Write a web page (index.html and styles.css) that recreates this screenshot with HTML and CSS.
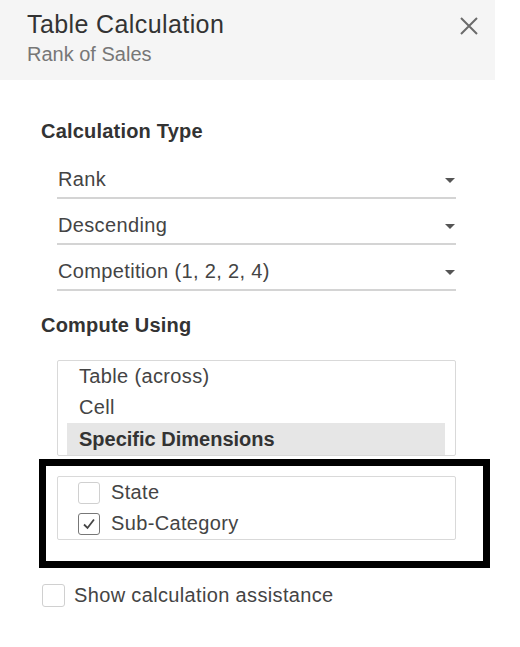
FILE: index.html
```html
<!DOCTYPE html>
<html>
    <head>
        <title>Table Calculation</title>
        <meta charset="UTF-8">
        <meta name="viewport" content="width=device-width, initial-scale=1.0">
        <link rel="stylesheet" href="styles.css">
    </head>
    <body>
        <header class="dialog-head">
            <div class="titles">
                <h2 class="title">Table Calculation</h2>
                <div class="subtitle">Rank of Sales</div>
            </div>
            <svg class="close" width="18" height="18" viewBox="0 0 18 18">
                <path d="M1 1 L17 17 M17 1 L1 17" stroke="#6b6b6b" stroke-width="2" fill="none"/>
            </svg>
        </header>
        <section class="panel">
            <h3 class="heading">Calculation Type</h3>
            <div class="dropdown"><span>Rank</span><i class="caret"></i></div>
            <div class="dropdown"><span>Descending</span><i class="caret"></i></div>
            <div class="dropdown"><span>Competition (1, 2, 2, 4)</span><i class="caret"></i></div>

            <h3 class="heading compute">Compute Using</h3>
            <ul class="listbox">
                <li class="first">Table (across)</li>
                <li>Cell</li>
                <li class="selected">Specific Dimensions</li>
            </ul>

            <!-- highlighted area -->
            <div class="callout">
                <ul class="checklist">
                    <li><span class="box"></span>State</li>
                    <li><span class="box checked">
                        <svg width="16" height="16" viewBox="0 0 16 16">
                            <path d="M3 8.5 L6.5 12 L13 3.5" stroke="#444" stroke-width="1.8" fill="none"/>
                        </svg>
                    </span>Sub-Category</li>
                </ul>
            </div>

            <div class="assist"><span class="box"></span>Show calculation assistance</div>
        </section>
    </body>
</html>
```

FILE: styles.css
```css
* {
    box-sizing: border-box;
}

body {
    margin: 0;
    background: #fff;
    font-family: "Liberation Sans", Arial, sans-serif;
    color: #444;
}

/* header of the dialog */
.dialog-head {
    width: 495px;
    height: 80px;
    background: #f5f5f5;
    padding: 9px 17px 0 27px;
    display: flex;
    justify-content: space-between;
    align-items: flex-start;
}

.title {
    margin: 0;
    font-size: 25px;
    line-height: 30px;
    font-weight: normal;
    letter-spacing: 0.4px;
    color: #333;
}

.subtitle {
    margin-top: 3px;
    font-size: 20px;
    line-height: 24px;
    color: #777;
}

.close {
    margin-top: 8px;
}

.panel {
    padding-left: 41px;
    font-size: 20px;
    letter-spacing: 0.35px;
}

.heading {
    margin: 39px 0 0;
    font-size: 20px;
    line-height: 24px;
    font-weight: bold;
    letter-spacing: 0.2px;
    color: #333;
}

.heading.compute {
    margin-top: 22px;
}

/* dropdowns */
.dropdown {
    width: 399px;
    height: 46px;
    margin-left: 16px;
    padding: 14px 1px 0 1px;
    line-height: 24px;
    border-bottom: 2px solid #d4d4d4;
    display: flex;
    justify-content: space-between;
    align-items: flex-start;
}

.dropdown:first-of-type {
    margin-top: 10px;
}

.caret {
    width: 0;
    height: 0;
    margin-top: 11px;
    border-left: 5px solid transparent;
    border-right: 5px solid transparent;
    border-top: 5px solid #555;
}

/* compute using list */
.listbox {
    list-style: none;
    width: 399px;
    height: 96px;
    margin: 23px 0 0 16px;
    padding: 0 10px 0 9px;
    border: 1px solid #d9d9d9;
    border-radius: 2px;
    overflow: hidden;
}

.listbox li {
    height: 32px;
    line-height: 32px;
    padding-left: 12px;
}

.listbox li.first {
    height: 30px;
    line-height: 30px;
}

.listbox li.selected {
    background: #e6e6e6;
    font-weight: bold;
    letter-spacing: 0;
    color: #333;
}

/* black frame */
.callout {
    width: 451px;
    height: 109px;
    margin: 3px 0 0 -2px;
    padding: 10px 0 0 11px;
    border: 7px solid #000;
}

.checklist {
    list-style: none;
    width: 399px;
    height: 64px;
    margin: 0;
    padding: 0 0 0 20px;
    border: 1px solid #d9d9d9;
    border-radius: 2px;
}

.checklist li {
    height: 31px;
    line-height: 31px;
    display: flex;
    align-items: center;
    gap: 11px;
}

.box {
    width: 22px;
    height: 22px;
    border: 1.5px solid #d0d0d0;
    border-radius: 3px;
    display: flex;
    align-items: center;
    justify-content: center;
    flex-shrink: 0;
}

.box.checked {
    border-color: #777;
}

.assist {
    margin: 15px 0 0 1px;
    line-height: 24px;
    display: flex;
    align-items: center;
    gap: 9px;
}

.assist .box {
    width: 23px;
    height: 23px;
}
```
